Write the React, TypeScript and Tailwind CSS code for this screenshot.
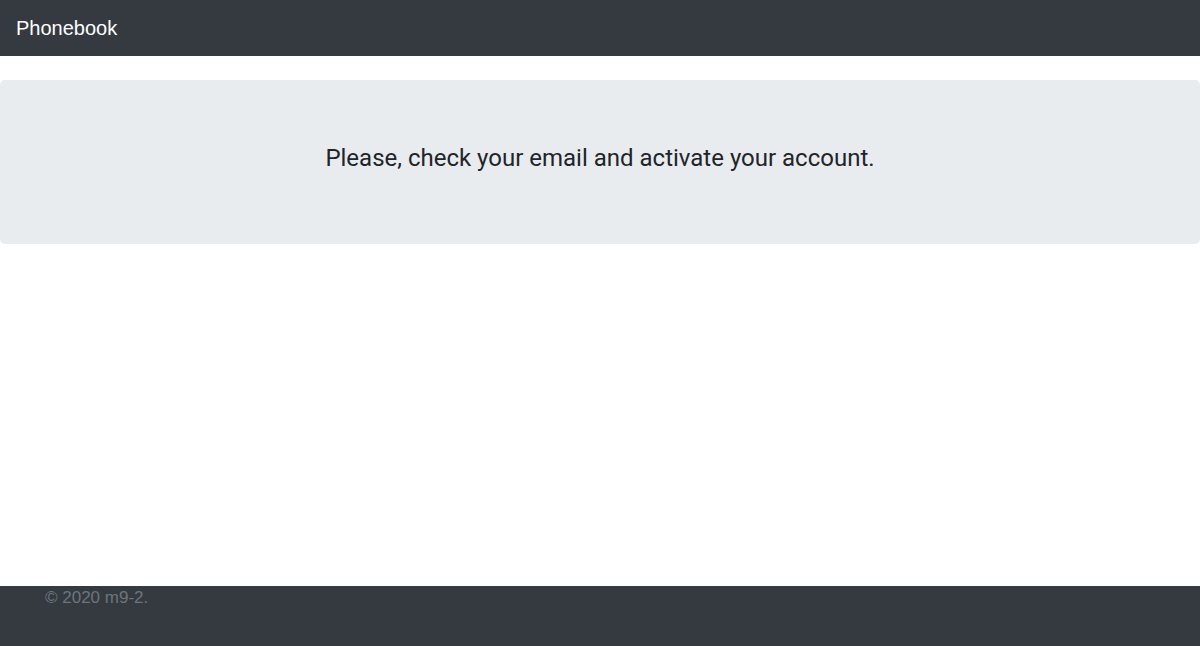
export default function App() {
  return (
    <div
      className="relative min-h-[646px] bg-white text-[#212529]"
      style={{ fontFamily: '"Liberation Sans", Arial, sans-serif' }}
    >
      <nav className="flex h-14 items-center bg-[#343a40] px-4">
        <span className="text-[20px] leading-[30px] text-white">Phonebook</span>
      </nav>

      <main className="mt-6">
        <div className="rounded-[5px] bg-[#e9ecef] px-8 pt-16 pb-[63px] text-center">
          <h4
            className="mb-2 text-[24px] leading-[29px] font-normal"
            style={{ fontFamily: 'Roboto, "Liberation Sans", sans-serif' }}
          >
            Please, check your email and activate your account.
          </h4>
        </div>
      </main>

      <footer className="absolute right-0 bottom-0 left-0 h-[60px] bg-[#343a40]">
        <div className="mx-auto max-w-[1140px] px-[15px]">
          <span className="text-[17px] leading-6 text-[#6c757d]">© 2020 m9-2.</span>
        </div>
      </footer>
    </div>
  );
}
